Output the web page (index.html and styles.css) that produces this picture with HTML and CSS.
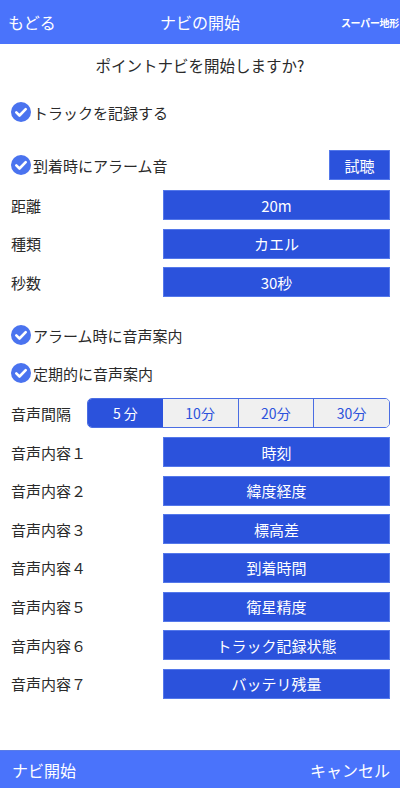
FILE: index.html
```html
<!DOCTYPE html>
<html lang="ja">
  <head>
    <meta charset="UTF-8" />
    <meta name="viewport" content="width=device-width, initial-scale=1.0" />
    <title>ナビの開始</title>
    <link rel="stylesheet" href="styles.css">
  </head>
  <body>
    <div class="screen">
      <header class="topbar">
        <span class="back">もどる</span>
        <span class="title">ナビの開始</span>
        <span class="brand">スーパー地形</span>
      </header>

      <main class="content">
        <p class="question">ポイントナビを開始しますか?</p>

        <div class="check first">
          <span class="tick"><svg viewBox="0 0 20 20"><circle cx="10" cy="10" r="10" fill="#4a73ef"/><path d="M5.3 10.3l3.2 3.2 6.2-6.4" fill="none" stroke="#fff" stroke-width="2.6" stroke-linecap="round" stroke-linejoin="round"/></svg></span>
          トラックを記録する
        </div>

        <div class="check gap-big">
          <span class="tick"><svg viewBox="0 0 20 20"><circle cx="10" cy="10" r="10" fill="#4a73ef"/><path d="M5.3 10.3l3.2 3.2 6.2-6.4" fill="none" stroke="#fff" stroke-width="2.6" stroke-linecap="round" stroke-linejoin="round"/></svg></span>
          到着時にアラーム音
          <span class="btn listen">試聴</span>
        </div>

        <div class="rows">
          <div class="row"><span class="label">距離</span><span class="btn">20m</span></div>
          <div class="row"><span class="label">種類</span><span class="btn">カエル</span></div>
          <div class="row"><span class="label">秒数</span><span class="btn">30秒</span></div>
        </div>

        <div class="check gap-big">
          <span class="tick"><svg viewBox="0 0 20 20"><circle cx="10" cy="10" r="10" fill="#4a73ef"/><path d="M5.3 10.3l3.2 3.2 6.2-6.4" fill="none" stroke="#fff" stroke-width="2.6" stroke-linecap="round" stroke-linejoin="round"/></svg></span>
          アラーム時に音声案内
        </div>

        <div class="check gap-small">
          <span class="tick"><svg viewBox="0 0 20 20"><circle cx="10" cy="10" r="10" fill="#4a73ef"/><path d="M5.3 10.3l3.2 3.2 6.2-6.4" fill="none" stroke="#fff" stroke-width="2.6" stroke-linecap="round" stroke-linejoin="round"/></svg></span>
          定期的に音声案内
        </div>

        <div class="interval">
          <span class="label">音声間隔</span>
          <div class="segments">
            <span class="seg on">5&nbsp;分</span>
            <span class="seg">10分</span>
            <span class="seg">20分</span>
            <span class="seg">30分</span>
          </div>
        </div>

        <div class="rows voice">
          <div class="row"><span class="label">音声内容１</span><span class="btn">時刻</span></div>
          <div class="row"><span class="label">音声内容２</span><span class="btn">緯度経度</span></div>
          <div class="row"><span class="label">音声内容３</span><span class="btn">標高差</span></div>
          <div class="row"><span class="label">音声内容４</span><span class="btn">到着時間</span></div>
          <div class="row"><span class="label">音声内容５</span><span class="btn">衛星精度</span></div>
          <div class="row"><span class="label">音声内容６</span><span class="btn">トラック記録状態</span></div>
          <div class="row"><span class="label">音声内容７</span><span class="btn">バッテリ残量</span></div>
        </div>
      </main>

      <footer class="bottombar">
        <span>ナビ開始</span>
        <span>キャンセル</span>
      </footer>
    </div>
  </body>
</html>
```

FILE: styles.css
```css
body {
  margin: 0;
  padding: 0;
  background-color: #fff;
  font-family: "Noto Sans CJK JP", "Noto Sans", sans-serif;
  color: #2a2a2a;
}
.screen {
  width: 400px;
  height: 788px;
  display: flex;
  flex-direction: column;
  overflow: hidden;
}
.topbar {
  height: 44px;
  flex: none;
  background-color: #4a73fb;
  color: #fff;
  display: flex;
  align-items: center;
  position: relative;
  font-size: 16px;
}
.back {
  padding-left: 8px;
}
.title {
  position: absolute;
  left: 0;
  right: 0;
  text-align: center;
  pointer-events: none;
}
.brand {
  margin-left: auto;
  font-size: 10px;
  font-weight: bold;
  letter-spacing: -0.3px;
  padding-right: 1px;
}
.content {
  flex: 1;
  display: flex;
  flex-direction: column;
  font-size: 15px;
}
.question {
  margin: 0;
  height: 42px;
  line-height: 42px;
  text-align: center;
  font-size: 15.5px;
}
.check {
  height: 30px;
  display: flex;
  align-items: center;
  padding: 0 10px 0 11px;
}
.check.first {
  margin-top: 11px;
}
.check.gap-big {
  margin-top: 23px;
}
.check.gap-small {
  margin-top: 8px;
}
.tick {
  width: 20px;
  height: 20px;
  margin-right: 2px;
  display: flex;
}
.tick svg {
  width: 20px;
  height: 20px;
}
.btn {
  background-color: #2b52dc;
  border: 1px solid #5478ea;
  box-sizing: border-box;
  color: #fff;
  display: flex;
  align-items: center;
  justify-content: center;
  height: 30px;
}
.listen {
  margin-left: auto;
  width: 61px;
}
.rows {
  margin-top: 10px;
  display: flex;
  flex-direction: column;
  gap: 8.6px;
}
.row {
  display: flex;
  align-items: center;
  padding: 0 10px 0 11px;
}
.row .label {
  width: 152px;
}
.row .btn {
  flex: 1;
}
.interval {
  margin-top: 10px;
  height: 30px;
  display: flex;
  align-items: center;
  padding: 0 10px 0 11px;
}
.interval .label {
  width: 76px;
}
.segments {
  flex: 1;
  height: 30px;
  display: flex;
  border: 1px solid #4a6de3;
  border-radius: 5px;
  overflow: hidden;
  box-sizing: border-box;
}
.seg {
  flex: 1;
  display: flex;
  align-items: center;
  justify-content: center;
  background-color: #f0f0f0;
  color: #2b52dc;
  font-size: 14px;
  border-left: 1px solid #4a6de3;
}
.seg.on {
  background-color: #2b52dc;
  color: #fff;
  border-left: none;
}
.seg.on + .seg {
  border-left: none;
}
.rows.voice {
  margin-top: 9px;
}
.bottombar {
  height: 38px;
  flex: none;
  background-color: #4a73fb;
  border-top: 1px solid #5a7ce6;
  box-sizing: border-box;
  color: #fff;
  display: flex;
  align-items: center;
  justify-content: space-between;
  padding: 0 10px 0 12px;
  font-size: 16px;
}
```
